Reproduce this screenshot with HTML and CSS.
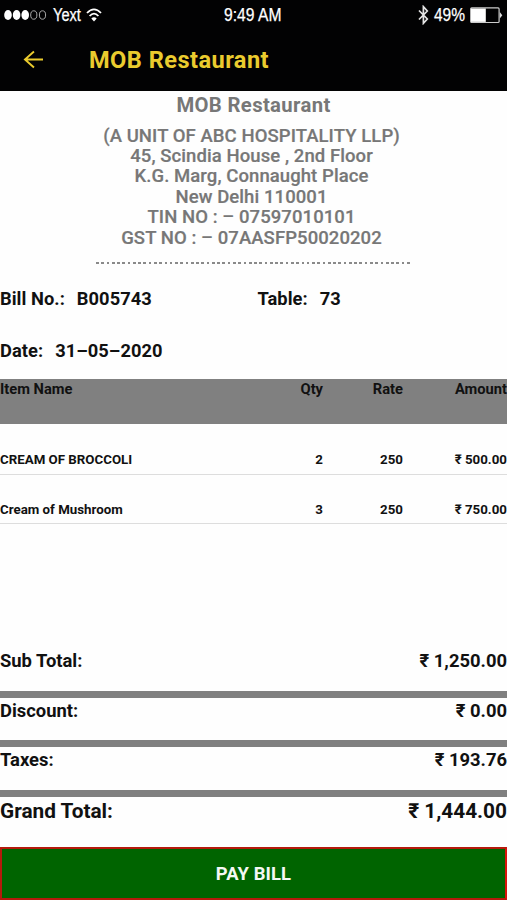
FILE: index.html
```html
<!DOCTYPE html>
<html lang="en">
<head>
<meta charset="utf-8">
<title>MOB Restaurant</title>
<link rel="stylesheet" href="styles.css">
</head>
<body>
<div class="screen">
  <header class="top">
    <div class="status">
      <div class="status-left">
        <svg class="signal" viewBox="0 0 44 12" aria-hidden="true">
          <g fill="#fff"><ellipse cx="4" cy="6" rx="3.8" ry="4.9"/><ellipse cx="12.6" cy="6" rx="3.8" ry="4.9"/><ellipse cx="21.2" cy="6" rx="3.8" ry="4.9"/></g>
          <g fill="none" stroke="#aaa" stroke-width="1"><ellipse cx="29.8" cy="6" rx="3.1" ry="4.2"/><ellipse cx="38.5" cy="6" rx="3.1" ry="4.2"/></g>
        </svg>
        <span class="carrier">Yext</span>
        <svg class="wifi" viewBox="0 0 16 14" aria-hidden="true">
          <g fill="none" stroke="#fff" stroke-width="1.8"><path d="M1 5Q8-2.4 15 5"/><path d="M3.6 8Q8 3.4 12.4 8"/></g>
          <path d="M5.3 10.4Q8 8 10.7 10.4L8 13.5Z" fill="#fff"/>
        </svg>
      </div>
      <span class="clock">9:49 AM</span>
      <div class="status-right">
        <svg class="bluetooth" viewBox="0 0 11 20" aria-hidden="true"><path d="M1 5.5L9.3 14L5.4 18.3V1.7L9.3 6L1 14.5" fill="none" stroke="#e4e4e4" stroke-width="1.7"/></svg>
        <span class="percent">49%</span>
        <svg class="battery" viewBox="0 0 33 17" aria-hidden="true">
          <rect x=".7" y=".9" width="28.4" height="14.6" rx="1" fill="none" stroke="#ccc" stroke-width="1.2"/>
          <rect x="1" y="1.5" width="14.8" height="13.4" fill="#fff"/>
          <path d="M29.8 5L32.3 8.2L29.8 11.4Z" fill="#ddd"/>
        </svg>
      </div>
    </div>
    <div class="appbar">
      <svg class="back" viewBox="0 0 22 20" aria-hidden="true"><path d="M11.5 1.5L2 10L11.5 18.5M2 10H21" fill="none" stroke="#eacb2e" stroke-width="2"/></svg>
      <h1>MOB Restaurant</h1>
    </div>
  </header>

  <section class="outlet">
    <h2>MOB Restaurant</h2>
    <p>(A UNIT OF ABC HOSPITALITY LLP)</p>
    <p>45, Scindia House , 2nd Floor</p>
    <p>K.G. Marg, Connaught Place</p>
    <p>New Delhi 110001</p>
    <p>TIN NO : – 07597010101</p>
    <p>GST NO : – 07AASFP50020202</p>
    <div class="dots"></div>
  </section>

  <section class="meta">
    <div class="field"><span>Bill No.:</span><span>B005743</span></div>
    <div class="field"><span>Table:</span><span>73</span></div>
    <div class="field"><span>Date:</span><span>31–05–2020</span></div>
  </section>

  <section class="items">
    <div class="row head"><span>Item Name</span><span>Qty</span><span>Rate</span><span>Amount</span></div>
    <div class="row"><span>CREAM OF BROCCOLI</span><span>2</span><span>250</span><span>₹ 500.00</span></div>
    <div class="row"><span>Cream of Mushroom</span><span>3</span><span>250</span><span>₹ 750.00</span></div>
  </section>

  <section class="totals">
    <div class="total"><span>Sub Total:</span><span>₹ 1,250.00</span></div>
    <div class="total"><span>Discount:</span><span>₹ 0.00</span></div>
    <div class="total"><span>Taxes:</span><span>₹ 193.76</span></div>
    <div class="total grand"><span>Grand Total:</span><span>₹ 1,444.00</span></div>
  </section>

  <button class="pay">PAY BILL</button>
</div>
</body>
</html>
```

FILE: styles.css
```css
* { box-sizing: border-box; }
body, h1, h2, p { margin: 0; }
body { background: #fefefe; color: #111; font-family: Roboto, sans-serif; font-weight: 700; }
.screen { width: 507px; height: 900px; display: flex; flex-direction: column; overflow: hidden; white-space: nowrap; }

.top { height: 91px; background: #020203; color: #fff; flex: none; }
.status { height: 30px; display: grid; grid-template-columns: 1fr 59px 1fr; align-items: center; font: 400 17.6px/30px "Liberation Sans", sans-serif; }
.status-left, .status-right { display: flex; align-items: center; }
.status-left { padding-left: 4px; }
.status-right { justify-content: flex-end; padding-right: 4px; }
.signal { width: 44px; height: 12px; }
.carrier, .clock, .percent { transform-origin: 0 50%; -webkit-text-stroke: .25px #fff; }
.carrier { width: 29px; margin-left: 4.5px; transform: scaleX(.83); }
.clock { transform: scaleX(.89); }
.percent { width: 31px; margin: 0 5px 0 5px; transform: scaleX(.88); }
.wifi { width: 16px; height: 14px; margin-left: 4.5px; }
.bluetooth { width: 11px; height: 20px; }
.battery { width: 33px; height: 17px; }
.appbar { height: 60px; display: flex; align-items: center; padding-left: 23px; }
.back { width: 21px; height: 19px; margin-top: -2px; }
h1 { margin-left: 45px; font-size: 23.6px; line-height: 60px; font-weight: 700; letter-spacing: .45px; color: #eacb2e; }

.outlet { height: 189px; flex: none; color: #777; text-align: center; padding-top: 1px; }
h2 { font-size: 20.3px; line-height: 26px; font-weight: 700; letter-spacing: .35px; margin-bottom: 7.5px; }
.outlet p { font-size: 18.5px; font-weight: 500; -webkit-text-stroke: .2px #777; line-height: 20.4px; letter-spacing: .08px; padding-right: 4px; }
.dots { width: 316px; height: 2.5px; margin: 14px auto 0; background: repeating-linear-gradient(90deg, #8a8a8a 0 2.7px, transparent 2.7px 5.27px); }

.meta { height: 99px; flex: none; display: grid; grid-template-columns: 257.5px 1fr; grid-auto-rows: 52px; font-size: 18.3px; line-height: 38px; letter-spacing: .05px; }
.field { display: flex; gap: 12px; }

.items { flex: 1; }
.row { height: 50px; display: grid; grid-template-columns: 230px 93px 80px 1fr; align-items: end; border-bottom: 1px solid #ddd; font-size: 13.3px; line-height: 28px; }
.row span + span { text-align: right; }
.row.head { height: 45px; align-items: start; background: #808080; border: 0; font-size: 14.7px; line-height: 21px; }
.row.head + .row { height: 50.6px; }
.row.head + .row + .row { height: 49.4px; line-height: 27px; }

.totals { flex: none; }
.total { height: 49.6px; display: flex; justify-content: space-between; border-bottom: 7px solid #808080; font-size: 18.4px; line-height: 26px; }
.total.grand { height: 50px; border: 0; font-size: 20.8px; line-height: 28px; }

.pay { height: 53px; flex: none; padding: 1px 0 0; border: 2px solid #b51a0c; border-right-color: #d8140c; background: #006400; color: #f4f8f4; font: 700 18.4px/20px Roboto, sans-serif; letter-spacing: .1px; }
```
